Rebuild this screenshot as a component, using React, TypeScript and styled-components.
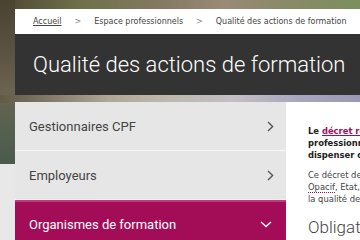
import React, { FC } from 'react'
import styled, { createGlobalStyle } from 'styled-components'

const GlobalStyle = createGlobalStyle `
  body {
    margin: 0;
    background: #e8e8e8;
  }
`

const Chevron: FC <{ down?: boolean }> = ({ down }) =>
  down ? (
    <svg width = '12' height = '7' viewBox = '0 0 12 7' fill = 'none'>
      <path d = 'M1 1l5 4.5L11 1' stroke = '#fff' strokeWidth = '1.4' />
    </svg>
  ) : (
    <svg width = '7' height = '11' viewBox = '0 0 7 11' fill = 'none'>
      <path d = 'M1 1l4.6 4.5L1 10' stroke = '#555' strokeWidth = '1.4' />
    </svg>
  )

const App: FC = () => {
  const menu = [
    { label: 'Gestionnaires CPF', active: false },
    { label: 'Employeurs', active: false },
    { label: 'Organismes de formation', active: true }
  ]

  return (
    <Page>
      <GlobalStyle />
      <Breadcrumb>
        <Crumb href = '#'>Accueil</Crumb>
        <Sep>&gt;</Sep>
        <span>Espace professionnels</span>
        <Sep>&gt;</Sep>
        <span>Qualité des actions de formation</span>
      </Breadcrumb>
      <TitleBar>Qualité des actions de formation</TitleBar>
      <Main>
        <Sidebar>
          {
            menu.map (
              (item, i) =>
                <NavItem key = { i } active = { item.active }>
                  { item.label }
                  <Chevron down = { item.active } />
                </NavItem>
            )
          }
        </Sidebar>
        <Content>
          <Lead>
            Le <Link href = '#'>décret relatif à la qualité des actions de la formation</Link><br />
            professionnelle continue précise les critères permettant de<br />
            dispenser des formations de qualité.
          </Lead>
          <Text>
            Ce décret demande aux financeurs de la formation (OPCA,<br />
            <Abbr>Opacif</Abbr>, Etat, Régions, Pôle emploi, Agefiph) de s'assurer de<br />
            la qualité des actions de formation qu'ils financent.
          </Text>
          <Heading>Obligations des organismes de formation</Heading>
        </Content>
      </Main>
    </Page>
  )
}

const Page = styled.div `
  min-height: 240px;
  padding: 9px 0 0 15px;
  background-color: #e8e8e8;
  background-image:
    linear-gradient(90deg, #625a47 0%, #7d7462 12%, #aea796 30%, #bdb7ab 45%, #c2bec3 65%, #a9a7bf 82%, #9998b6 100%),
    linear-gradient(180deg, #4a4331 0%, #5a5240 30%, #6b6350 55%, #55604f 80%, #4b5a4d 100%),
    linear-gradient(90deg, #4c4634 0%, #5f5d40 12%, #6e7049 22%, #847a62 45%, #9a8977 62%, #8a8a68 78%, #7c8f5e 100%);
  background-size: 100% 8px, 15px 164px, 100% 164px;
  background-position: 0 95px, 0 0, 0 0;
  background-repeat: no-repeat;
`

const Breadcrumb = styled.nav `
  height: 25px;
  display: flex;
  align-items: center;
  padding-left: 18px;
  background: #fff;
  font-family: 'DejaVu Sans', Verdana, sans-serif;
  font-size: 8px;
  color: #444;
  white-space: nowrap;
  overflow: hidden;
`

const Crumb = styled.a `
  color: #444;
  text-decoration: underline;
`

const Sep = styled.span `
  color: #888;
  margin: 0 13px;
`

const TitleBar = styled.h1 `
  margin: 0;
  height: 61px;
  display: flex;
  align-items: center;
  padding-left: 18px;
  background: #333;
  color: #fff;
  font-family: Roboto, sans-serif;
  font-weight: 300;
  font-size: 22px;
  white-space: nowrap;
`

const Main = styled.div `
  margin-top: 7px;
  display: grid;
  grid-template-columns: 271px 1fr;
  height: 138px;
  overflow: hidden;
`

const Sidebar = styled.ul `
  margin: 0;
  padding: 0;
  list-style: none;
  display: flex;
  flex-direction: column;
  background: #e6e6e6;
`

const NavItem = styled.li <{ active?: boolean }> `
  height: ${ p => p.active ? '47px' : '49px' };
  flex-shrink: 0;
  display: flex;
  align-items: center;
  justify-content: space-between;
  padding: 0 ${ p => p.active ? '14px' : '12px' } 0 14px;
  box-sizing: border-box;
  background: ${ p => p.active ? '#a30d58' : '#e6e6e6' };
  border-top: ${ p => p.active ? '2px solid #c13a7b' : 'none' };
  border-bottom: ${ p => p.active ? 'none' : '1px solid #f6f6f6' };
  color: ${ p => p.active ? '#fff' : '#444' };
  font-family: Roboto, sans-serif;
  font-size: 13px;
`

const Content = styled.div `
  background: #fff;
  padding: 23px 0 0 22px;
  overflow: hidden;
  white-space: nowrap;
  font-family: 'DejaVu Sans', Verdana, sans-serif;
  font-size: 8.4px;
  line-height: 12px;
  color: #444;
`

const Lead = styled.p `
  margin: 0 0 8px;
  font-weight: bold;
  color: #222;
`

const Link = styled.a `
  color: #a30d58;
  text-decoration: underline;
`

const Text = styled.p `
  margin: 0;
`

const Abbr = styled.abbr `
  text-decoration: none;
  border-bottom: 1px dotted #a30d58;
`

const Heading = styled.h2 `
  margin: 16px 0 0;
  font-family: Roboto, sans-serif;
  font-weight: 300;
  font-size: 17px;
  color: #444;
`

export default App
